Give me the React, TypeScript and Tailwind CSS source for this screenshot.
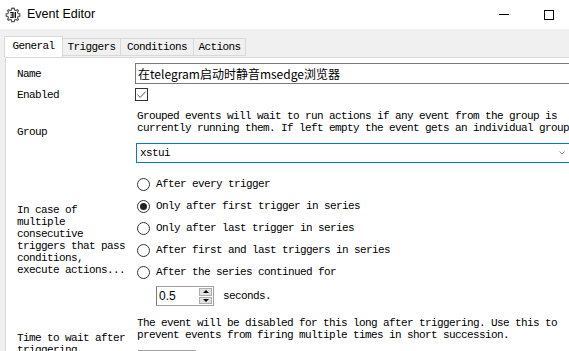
import React from 'react';

const mono = "font-['Liberation_Mono','DejaVu_Sans_Mono',monospace] text-[11px] leading-[12px] tracking-[-0.6px] text-black";

const GearIcon: React.FC = () => (
  <svg width="16" height="16" viewBox="0 0 16 16">
    <g fill="none" stroke="#555" strokeWidth="1.2">
      <path d="M8 1.2 L9.3 1.4 L9.6 3 L11 3.6 L12.4 2.7 L13.4 3.7 L12.5 5.1 L13.1 6.5 L14.8 6.8 L14.8 9.2 L13.1 9.5 L12.5 10.9 L13.4 12.3 L12.4 13.3 L11 12.4 L9.6 13 L9.3 14.6 L6.7 14.6 L6.4 13 L5 12.4 L3.6 13.3 L2.6 12.3 L3.5 10.9 L2.9 9.5 L1.2 9.2 L1.2 6.8 L2.9 6.5 L3.5 5.1 L2.6 3.7 L3.6 2.7 L5 3.6 L6.4 3 L6.7 1.4 Z" />
    </g>
    <path d="M5.2 5 L8.6 5 L8.6 11 L5.2 11 L5.2 9.8 L7.3 9.8 L7.3 8.6 L5.6 8.6 L5.6 7.4 L7.3 7.4 L7.3 6.2 L5.2 6.2 Z" fill="#111" />
    <rect x="9.6" y="5" width="1.4" height="6" fill="#111" />
  </svg>
);

const Radio: React.FC<{ label: string; checked?: boolean }> = ({ label, checked }) => (
  <div className="flex h-[22px] items-center">
    <span className="ml-[2px] flex h-[13px] w-[13px] items-center justify-center rounded-full border border-[#333] bg-white">
      {checked && <span className="h-[7px] w-[7px] rounded-full bg-[#222]" />}
    </span>
    <span className={`${mono} ml-[6px]`}>{label}</span>
  </div>
);

const SpinBox: React.FC<{ value?: string; width: string }> = ({ value, width }) => (
  <div className={`flex h-[20px] ${width} border border-[#a0a0a0] border-l-[#7a7a7a] bg-white`}>
    <span className="flex-1 pl-[2px] pt-[2px] font-['Liberation_Sans',Arial,sans-serif] text-[12px] leading-[14px] text-black">
      {value}
    </span>
    <div className="flex w-[14px] flex-col gap-[1px] py-[1px] pr-[1px]">
      <span className="flex flex-1 items-center justify-center border border-[#adadad] bg-[#e1e1e1]">
        <span className="h-0 w-0 border-x-[3px] border-b-[3px] border-x-transparent border-b-black" />
      </span>
      <span className="flex flex-1 items-center justify-center border border-[#adadad] bg-[#e1e1e1]">
        <span className="h-0 w-0 border-x-[3px] border-t-[3px] border-x-transparent border-t-black" />
      </span>
    </div>
  </div>
);

const Row: React.FC<{ label: React.ReactNode; className?: string; children: React.ReactNode }> = ({
  label,
  className = '',
  children,
}) => (
  <div className={`flex ${className}`}>
    <div className={`${mono} flex w-[118px] shrink-0 items-center`}>{label}</div>
    <div className="min-w-0 flex-1">{children}</div>
  </div>
);

export default function App() {
  const tabs = ['Triggers', 'Conditions', 'Actions'];
  const tabWidths = ['w-[58px]', 'w-[73px]', 'w-[52px]'];

  return (
    <div className="flex h-[351px] w-[569px] flex-col overflow-hidden bg-[#f0f0f0]">
      {/* Title bar */}
      <div className="flex h-[29px] shrink-0 items-center bg-white">
        <div className="ml-[5px]">
          <GearIcon />
        </div>
        <span className="ml-[6px] font-['Liberation_Sans',Arial,sans-serif] text-[12.5px] text-black">Event Editor</span>
        <div className="ml-auto flex items-center">
          <span className="h-px w-[10px] bg-black" />
          <span className="ml-[35px] mr-[15px] h-[10px] w-[10px] border border-black" />
        </div>
      </div>

      {/* Tab strip */}
      <div className="flex h-[28px] shrink-0 items-end pl-[4px]">
        <div className={`${mono} flex h-[21px] w-[59px] items-center justify-center border border-b-0 border-[#d9d9d9] bg-white pb-[2px]`}>
          General
        </div>
        {tabs.map((t, i) => (
          <div
            key={t}
            className={`${mono} mb-px flex h-[18px] ${tabWidths[i]} items-center justify-center border border-l-0 border-[#d9d9d9] bg-[#f0f0f0]`}
          >
            {t}
          </div>
        ))}
      </div>

      {/* Page: wider than the window, clipped on the right as in the dialog */}
      <div className="ml-[5px] w-[600px] flex-1 shrink-0 border-l border-t border-[#d9d9d9] bg-white pl-[11px]">
        <Row label="Name" className="mt-[5px]">
          <div className="flex h-[21px] items-center border border-[#7a7a7a] pl-[2px] font-['Noto_Sans_CJK_SC','Liberation_Sans',sans-serif] text-[12px] text-black">
            在telegram启动时静音msedge浏览器
          </div>
        </Row>

        <Row label="Enabled" className="mt-[4px]">
          <span className="flex h-[13px] w-[13px] items-center justify-center border border-[#333] bg-white">
            <svg width="11" height="11" viewBox="0 0 11 11">
              <path d="M1.5 5.8 L4.2 8.4 L9.6 2.6" fill="none" stroke="#555" strokeWidth="1" />
            </svg>
          </span>
        </Row>

        <Row label="Group">
          <p className={`${mono} mt-[9px] whitespace-pre pl-[2px]`}>
            {'Grouped events will wait to run actions if any event from the group is\ncurrently running them. If left empty the event gets an individual group.'}
          </p>
          <div className="mt-[9px] ml-px flex h-[20px] w-[438px] items-center border border-[#0078d7] pl-[3px]">
            <span className={mono}>xstui</span>
            <svg className="ml-auto mr-[8px]" width="6" height="4" viewBox="0 0 6 4">
              <path d="M0.5 0.5 L3 3 L5.5 0.5" fill="none" stroke="#888" strokeWidth="1" />
            </svg>
          </div>
        </Row>

        <Row
          label={
            <span className="whitespace-pre">
              {'In case of\nmultiple\nconsecutive\ntriggers that pass\nconditions,\nexecute actions...'}
            </span>
          }
          className="mt-[10px]"
        >
          <Radio label="After every trigger" />
          <Radio label="Only after first trigger in series" checked />
          <Radio label="Only after last trigger in series" />
          <Radio label="After first and last triggers in series" />
          <Radio label="After the series continued for" />
          <div className="mt-[3px] flex items-center pl-[21px]">
            <SpinBox value="0.5" width="w-[58px]" />
            <span className={`${mono} ml-[9px]`}>seconds.</span>
          </div>
        </Row>

        <Row
          label={<span className="whitespace-pre">{'Time to wait after\ntriggering'}</span>}
          className="mt-[11px]"
        >
          <p className={`${mono} whitespace-pre pl-[2px]`}>
            {'The event will be disabled for this long after triggering. Use this to\nprevent events from firing multiple times in short succession.'}
          </p>
          <div className="mt-[9px] ml-[3px]">
            <SpinBox value="" width="w-[58px]" />
          </div>
        </Row>
      </div>
    </div>
  );
}
